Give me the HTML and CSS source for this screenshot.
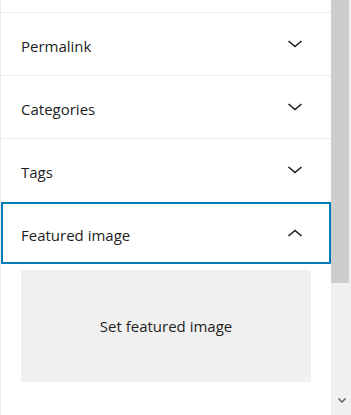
FILE: index.html
```
<!DOCTYPE html>
<html lang="en">
<head>
  <meta charset="UTF-8">
  <meta name="viewport" content="width=device-width, initial-scale=1.0">
  <title>Document settings</title>
  <link rel="stylesheet" href="styles.css">
</head>
<body>
  <div class="sidebar">
    <div class="top-gap"></div>
    <div class="panel">
      <button class="panel-toggle">
        <span>Permalink</span>
        <svg class="chevron" viewBox="0 0 16 8" width="16" height="8"><path d="M1.5 1 L8 6.5 L14.5 1" /></svg>
      </button>
    </div>
    <div class="panel">
      <button class="panel-toggle">
        <span>Categories</span>
        <svg class="chevron" viewBox="0 0 16 8" width="16" height="8"><path d="M1.5 1 L8 6.5 L14.5 1" /></svg>
      </button>
    </div>
    <div class="panel">
      <button class="panel-toggle">
        <span>Tags</span>
        <svg class="chevron" viewBox="0 0 16 8" width="16" height="8"><path d="M1.5 1 L8 6.5 L14.5 1" /></svg>
      </button>
    </div>
    <div class="panel is-open">
      <button class="panel-toggle is-focused">
        <span>Featured image</span>
        <svg class="chevron" viewBox="0 0 16 8" width="16" height="8"><path d="M1.5 7 L8 1.5 L14.5 7" /></svg>
      </button>
      <div class="panel-body">
        <button class="featured-image">Set featured image</button>
      </div>
    </div>
  </div>
  <!-- Scrollbar of the sidebar -->
  <div class="scrollbar">
    <div class="scroll-thumb"></div>
    <div class="scroll-track">
      <svg class="scroll-arrow" viewBox="0 0 8 5" width="8" height="5"><path d="M0.5 0.5 L4 4 L7.5 0.5" /></svg>
    </div>
  </div>
</body>
</html>
```

FILE: styles.css
```
body {
  font-family: 'Open Sans', 'Noto Sans', sans-serif;
  margin: 0;
  background-color: #ffffff;
  display: flex;
  height: 415px;
  overflow: hidden;
  color: #1e1e1e;
}
.sidebar {
  width: 330px;
  flex: none;
  border-left: 1px solid #ececec;
  background-color: #ffffff;
}
.top-gap {
  height: 12px;
}
.panel {
  border-top: 1px solid #ececec;
}
.panel-toggle {
  display: flex;
  justify-content: space-between;
  align-items: center;
  width: 100%;
  height: 62px;
  padding: 0 28px 0 20px;
  margin: 0;
  border: none;
  background: none;
  font-family: 'Open Sans', 'Noto Sans', sans-serif;
  font-size: 15px;
  color: #1e1e1e;
  text-align: left;
  box-sizing: border-box;
}
.panel-toggle span {
  padding-top: 3px;
}
.panel-toggle.is-focused {
  border: 2px solid #007cba;
  padding: 0 26px 0 18px;
}
.panel.is-open {
  border-top-color: #ffffff;
}
.chevron {
  flex-shrink: 0;
  fill: none;
  stroke: #1e1e1e;
  stroke-width: 1.6;
}
.panel-body {
  padding: 6px 20px 20px;
}
.featured-image {
  display: block;
  width: 100%;
  height: 112px;
  border: none;
  border-radius: 2px;
  background-color: #f0f0f0;
  font-family: 'Open Sans', 'Noto Sans', sans-serif;
  font-size: 15px;
  color: #1e1e1e;
  padding: 0;
}
.scrollbar {
  width: 20px;
  flex: none;
  display: flex;
  flex-direction: column;
  background-color: #f0f0f0;
}
.scroll-thumb {
  width: 18px;
  height: 283px;
  background-color: #cdcdcd;
}
.scroll-track {
  flex: 1;
  display: flex;
  align-items: flex-end;
  padding: 0 0 12px 7px;
}
.scroll-arrow {
  fill: none;
  stroke: #606060;
  stroke-width: 1.5;
}
```
